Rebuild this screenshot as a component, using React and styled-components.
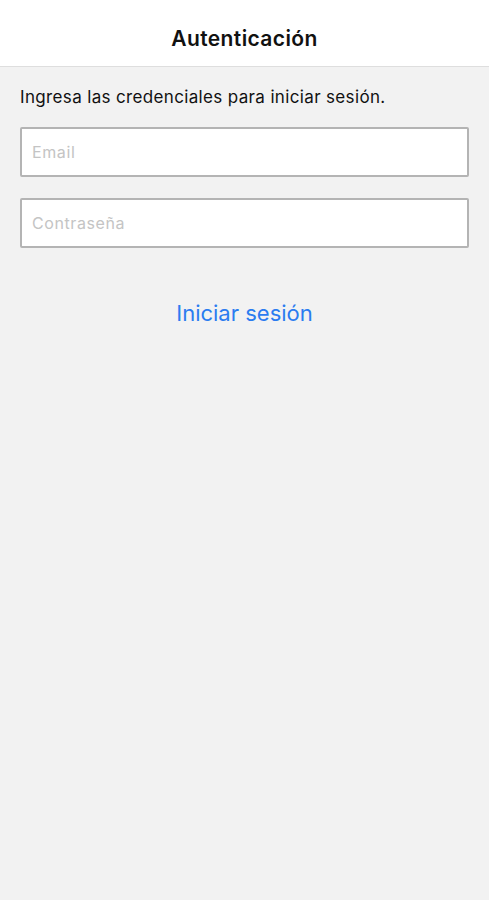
import styled, { createGlobalStyle } from 'styled-components';

const Global = createGlobalStyle`
  html, body { margin: 0; padding: 0; background: #f2f2f2; }
  body { font-family: Inter, "Noto Sans", "Liberation Sans", sans-serif; }
`;

const Screen = styled.div`
  min-height: 900px;
  background: #f2f2f2;
`;

const Header = styled.header`
  height: 67px;
  background: #ffffff;
  border-bottom: 1px solid #dedede;
  display: flex;
  align-items: center;
  justify-content: center;
  padding-top: 10px;
  box-sizing: border-box;
`;

const Title = styled.h1`
  margin: 0;
  font-size: 21px;
  font-weight: 600;
  letter-spacing: 0.4px;
  color: #111;
`;

const Body = styled.main`
  padding: 20px 20px 0;
  display: flex;
  flex-direction: column;
`;

const Hint = styled.p`
  margin: 0 0 20px;
  font-size: 17px;
  line-height: 20px;
  letter-spacing: 0.35px;
  color: #111;
`;

const Field = styled.input`
  height: 50px;
  box-sizing: border-box;
  border: 2px solid #b4b4b4;
  border-radius: 2px;
  background: #fff;
  padding: 0 10px;
  margin-bottom: ${p => p.last ? '46px' : '21px'};
  font-family: inherit;
  font-size: 16px;
  letter-spacing: 0.6px;
  outline: none;
  &::placeholder { color: #c4c4c4; }
`;

const LinkButton = styled.button`
  align-self: center;
  border: none;
  background: none;
  font-family: inherit;
  font-size: 22px;
  color: #2b7cf0;
  padding: 6px 10px;
  cursor: pointer;
`;

export default function App() {
  return (
    <Screen>
      <Global />
      <Header>
        <Title>Autenticación</Title>
      </Header>
      <Body>
        <Hint>Ingresa las credenciales para iniciar sesión.</Hint>
        <Field type="email" placeholder="Email" />
        <Field type="password" placeholder="Contraseña" last />
        <LinkButton>Iniciar sesión</LinkButton>
      </Body>
    </Screen>
  );
}
